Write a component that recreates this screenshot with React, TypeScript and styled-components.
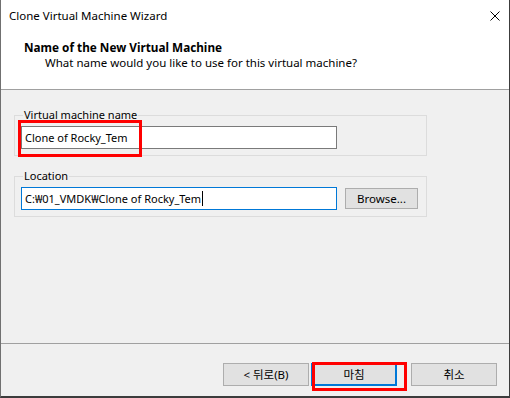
import React from "react";
import styled, { createGlobalStyle } from "styled-components";

const Global = createGlobalStyle`
  html, body { margin: 0; padding: 0; background: #ffffff; }
  body { font-family: "Segoe UI", "Noto Sans", "Noto Sans CJK KR", sans-serif; font-size: 11.5px; color: #000; }
  * { box-sizing: border-box; }
`;

const Window = styled.div`
  width: 510px;
  height: 398px;
  display: flex;
  flex-direction: column;
  background: #f0f0f0;
  border-left: 1px solid #707070;
  border-right: 1px solid #3c3c3c;
  border-bottom: 2px solid #3c3c3c;
  overflow: hidden;
`;

const Top = styled.div`
  background: #ffffff;
  height: 90px;
  border-bottom: 1px solid #a0a0a0;
  display: flex;
  flex-direction: column;
`;

const TitleBar = styled.div`
  height: 31px;
  display: flex;
  align-items: center;
  justify-content: space-between;
  padding: 0 9px 0 8px;
`;

const TitleText = styled.span`
  line-height: 16px;
`;

const CloseIcon = styled.svg`
  width: 10px;
  height: 10px;
  display: block;
`;

const Header = styled.div`
  padding: 9px 0 0 23px;
  display: flex;
  flex-direction: column;
`;

const HeaderTitle = styled.div`
  font-weight: 700;
  font-size: 11.75px;
  line-height: 15px;
`;

const HeaderSub = styled.div`
  padding-left: 21px;
  line-height: 15px;
`;

const Body = styled.div`
  flex: 1;
  padding: 17px 0 0 13px;
  display: flex;
  flex-direction: column;
  gap: 12px;
`;

const Group = styled.fieldset`
  margin: 0;
  width: 413px;
  border: 1px solid #dcdcdc;
  padding: 3px 6px 6px 6px;
  min-width: 0;
`;

const Legend = styled.legend`
  padding: 0 1px;
  margin-left: 2px;
  font-size: 11px;
  line-height: 16px;
`;

const Row = styled.div`
  display: flex;
  align-items: center;
  gap: 8px;
`;

const Marked = styled.div<{ $l: number; $t: number; $w: number; $h: number }>`
  position: relative;
  &::after {
    content: "";
    position: absolute;
    left: ${(p) => p.$l}px;
    top: ${(p) => p.$t}px;
    width: ${(p) => p.$w}px;
    height: ${(p) => p.$h}px;
    border: 3px solid #ff0000;
    pointer-events: none;
  }
`;

const TextBox = styled.div<{ $focused?: boolean }>`
  width: 316px;
  height: 23px;
  background: #ffffff;
  border: 1px solid ${(p) => (p.$focused ? "#0078d7" : "#7a7a7a")};
  padding: 0 3px;
  display: flex;
  align-items: center;
  font-size: 11px;
  line-height: 16px;
  white-space: nowrap;
`;

const Caret = styled.span`
  display: inline-block;
  width: 1px;
  height: 15px;
  background: #000;
  margin-left: 1px;
`;

const Button = styled.button<{ $default?: boolean; $w?: number; $h?: number }>`
  width: ${(p) => p.$w ?? 86}px;
  height: ${(p) => p.$h ?? 23}px;
  background: #e1e1e1;
  border: 1px solid ${(p) => (p.$default ? "#0078d7" : "#adadad")};
  ${(p) => (p.$default ? "box-shadow: inset -1px -1px 0 #0078d7;" : "")}
  font-family: inherit;
  font-size: 11.5px;
  color: #000;
  padding: 0;
  margin: 0;
  line-height: 16px;
`;

const Footer = styled.div`
  height: 53px;
  border-top: 1px solid #a0a0a0;
  display: flex;
  justify-content: flex-end;
  align-items: flex-start;
  padding: 19px 12px 0 0;
`;

const ButtonGroup = styled.div`
  display: flex;
  gap: 2px;
  margin-right: 14px;
`;

export default function App() {
  return (
    <>
      <Global />
      <Window>
        <Top>
          <TitleBar>
            <TitleText>Clone Virtual Machine Wizard</TitleText>
            <CloseIcon viewBox="0 0 10 10">
              <path d="M0.5 0.5 L9.5 9.5 M9.5 0.5 L0.5 9.5" stroke="#000" strokeWidth="1" fill="none" />
            </CloseIcon>
          </TitleBar>
          <Header>
            <HeaderTitle>Name of the New Virtual Machine</HeaderTitle>
            <HeaderSub>What name would you like to use for this virtual machine?</HeaderSub>
          </Header>
        </Top>
        <Body>
          <Group>
            <Legend>Virtual machine name</Legend>
            <Marked $l={-3} $t={-6} $w={118} $h={31}>
              <TextBox>Clone of Rocky_Tem</TextBox>
            </Marked>
          </Group>
          <Group>
            <Legend>Location</Legend>
            <Row>
              <TextBox $focused>
                C:₩01_VMDK₩Clone of Rocky_Tem
                <Caret />
              </TextBox>
              <Button $w={73} $h={21}>Browse...</Button>
            </Row>
          </Group>
        </Body>
        <Footer>
          <ButtonGroup>
            <Button>&lt; 뒤로(B)</Button>
            <Marked $l={1} $t={-1} $w={89} $h={23}>
              <Button $default>마침</Button>
            </Marked>
          </ButtonGroup>
          <Button>취소</Button>
        </Footer>
      </Window>
    </>
  );
}
